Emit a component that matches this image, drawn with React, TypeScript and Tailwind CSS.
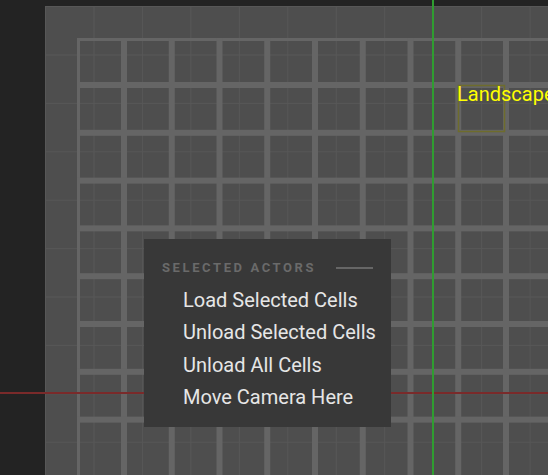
import React from 'react';

const thinX = Array.from({ length: 10 }, (_, i) => 93 + i * 48.45);
const thinY = Array.from({ length: 9 }, (_, i) => 54 + i * 48.4);
const thickX = Array.from({ length: 9 }, (_, i) => 123 + i * 47.75);
const thickY = Array.from({ length: 8 }, (_, i) => 84 + i * 47.8);

const items = ['Load Selected Cells', 'Unload Selected Cells', 'Unload All Cells', 'Move Camera Here'];

function Grid() {
  return (
    <svg width="503" height="469" viewBox="45 6 503 469" className="block">
      {thinX.map((x) => (
        <rect key={'tx' + x} x={x - 0.5} y={6} width={1} height={469} fill="#585858" />
      ))}
      {thinY.map((y) => (
        <rect key={'ty' + y} x={45} y={y - 0.5} width={503} height={1} fill="#585858" />
      ))}
      <rect x={76} y={37} width={3} height={438} fill="#656565" />
      <rect x={76} y={37} width={472} height={3} fill="#656565" />
      {thickX.map((x) => (
        <rect key={'kx' + x} x={x - 3} y={37} width={6} height={438} fill="#656565" />
      ))}
      {thickY.map((y) => (
        <rect key={'ky' + y} x={76} y={y - 3} width={472} height={6} fill="#656565" />
      ))}
      {/* landscape cell */}
      <rect x={457.5} y={84.5} width={46} height={46} fill="none" stroke="#6e6c2c" strokeWidth={1.5} />
    </svg>
  );
}

export default function App() {
  return (
    <div className="relative w-[548px] h-[475px] overflow-hidden bg-[#232323]" style={{ fontFamily: 'Roboto, sans-serif' }}>
      <div className="ml-[45px] mt-[6px] w-[503px] h-[469px] bg-[#4e4e4e] border-t border-l border-[#575757]">
        <Grid />
      </div>

      {/* axis lines */}
      <div className="absolute left-0 right-0 top-[392px] h-[2px] bg-[#7a2a2a]" />
      <div className="absolute top-0 bottom-0 left-[432px] w-[2px] bg-[#2f9d30]" />

      {/* landscape label */}
      <div className="absolute left-[457px] top-[82px] text-[20px] leading-[24px] text-[#ffff00] whitespace-nowrap">
        Landscape
      </div>

      {/* context menu */}
      <div className="absolute left-[144px] top-[239px] w-[247px] h-[188px] bg-[#383838] pt-[21px]">
        <div className="flex items-center pl-[18px] pr-[18px] gap-[20px]">
          <span className="text-[13px] leading-[16px] font-bold tracking-[0.2em] text-[#6a6a6a] whitespace-nowrap">
            SELECTED ACTORS
          </span>
          <div className="flex-1 h-[2px] bg-[#666666]" />
        </div>
        <div className="flex flex-col pl-[39px] mt-[8px]">
          {items.map((t) => (
            <div key={t} className="h-[32.3px] text-[20px] leading-[32px] text-[#e6e6e6] whitespace-nowrap">
              {t}
            </div>
          ))}
        </div>
      </div>
    </div>
  );
}
